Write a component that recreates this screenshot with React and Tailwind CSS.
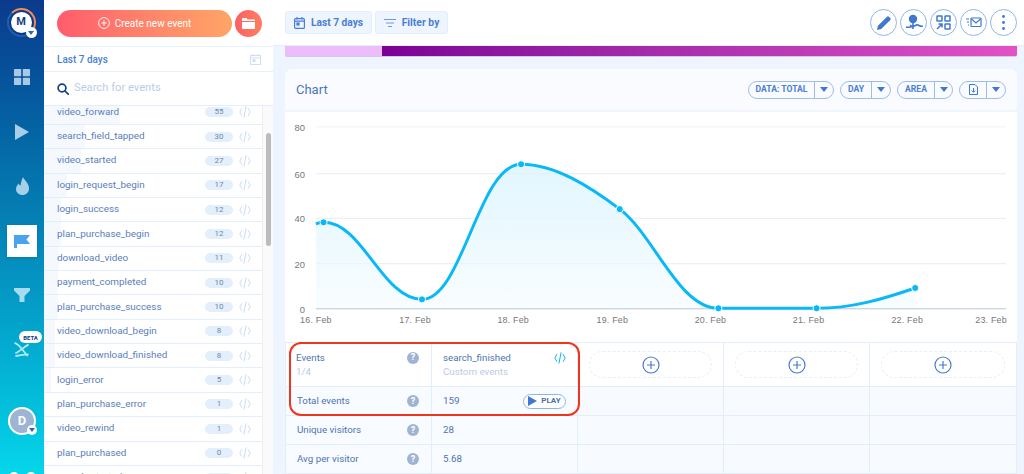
import React from "react";

const events = [
  ["video_forward", 55], ["search_field_tapped", 30], ["video_started", 27], ["login_request_begin", 17],
  ["login_success", 12], ["plan_purchase_begin", 12], ["download_video", 11], ["payment_completed", 10],
  ["plan_purchase_success", 10], ["video_download_begin", 8], ["video_download_finished", 8], ["login_error", 5],
  ["plan_purchase_error", 1], ["video_rewind", 1], ["plan_purchased", 0], ["search_started", 0],
];

const Code = ({ c = "#c9dbf4", w = 12 }) => (
  <svg width={w} height={w} viewBox="0 0 12 12" fill="none" stroke={c} strokeWidth="1" strokeLinecap="round" strokeLinejoin="round">
    <path d="M2.8 2.5 0.8 6l2 3.5M9.2 2.5 11.2 6l-2 3.5M7 0.8 5 11.2" />
  </svg>
);

const Q = () => (
  <span className="flex h-[12px] w-[12px] items-center justify-center rounded-full bg-[#9fb4d3] text-[9px] font-bold leading-none text-white">?</span>
);

const Caret = () => (
  <svg width="8" height="5" viewBox="0 0 8 5"><path d="M0 0h8L4 5z" fill="#3f78d0" /></svg>
);

const Pill = ({ w, d, children }) => (
  <div className={`flex h-[18px] items-center rounded-full border border-[#9dbdec] ${w}`}>
    <div className={`flex h-full items-center justify-center border-r border-[#9dbdec] text-[8.6px] font-bold text-[#4a7fd4] ${d}`}>{children}</div>
    <div className="flex flex-1 items-center justify-center"><Caret /></div>
  </div>
);

const Round = ({ children }) => (
  <div className="flex h-[27px] w-[27px] items-center justify-center rounded-full border border-[#8fb4ea] bg-white">{children}</div>
);

const Add = () => (
  <div className="flex h-full items-center justify-center border-r border-[#e3eefc] px-[11px]">
    <div className="flex h-[27px] w-full items-center justify-center rounded-full border border-dashed border-[#e6effb]">
      <svg width="18" height="18" viewBox="0 0 18 18" fill="none" stroke="#4a7bd0" strokeWidth="1.2"><circle cx="9" cy="9" r="8" /><path d="M9 5v8M5 9h8" /></svg>
    </div>
  </div>
);

const Label = ({ t }) => (
  <div className="flex items-center justify-between border-r border-b border-[#e3eefc] bg-[#f8fbff] pl-[11px] pr-[12px] text-[9.75px] text-[#4f74b0]"><span>{t}</span><Q /></div>
);
const Val = ({ t, children }) => (
  <div className="flex items-center justify-between border-r border-b border-[#e3eefc] bg-[#f8fbff] pl-[11px] pr-[11px] text-[9.75px] text-[#4f74b0]"><span>{t}</span>{children}</div>
);
const Blank = () => <div className="border-r border-b border-[#e3eefc] bg-[#f7faff]" />;

const xs = [["16. Feb", 314], ["17. Feb", 414], ["18. Feb", 513], ["19. Feb", 613], ["20. Feb", 712], ["21. Feb", 811], ["22. Feb", 910.5], ["23. Feb", 995]];
const ys = [["80", 127], ["60", 174.3], ["40", 219.3], ["20", 265], ["0", 310.5]];
const pts = [[321.7, 223.3], [421, 301], [521, 164.7], [620.5, 210], [720, 310], [819, 310], [918.5, 289.5]];
const line = "M314 224.8C316 224 319 223.5 321.7 223.3C361 223 381 301 421 301C462 301 478 164.7 521 164.7C555 164.7 590 187 620.5 210C655 236 680 310 720 310L819 310C855 310 885 301 918.5 289.5";

const Chart = () => (
  <svg width="731" height="232" viewBox="286 112 731 232" className="block" style={{ fontFamily: '"Liberation Sans", sans-serif' }}>
    <defs>
      <linearGradient id="fill" x1="0" y1="0" x2="0" y2="1">
        <stop offset="0" stopColor="#e2f6fe" />
        <stop offset="1" stopColor="#f8fdff" />
      </linearGradient>
    </defs>
    {ys.slice(0, 4).map(([t, y]) => <line key={t} x1="314" x2="1010" y1={y} y2={y} stroke="#eff1f4" strokeWidth="1" />)}
    <path d={line + "L918.5 310.5L314 310.5Z"} fill="url(#fill)" />
    {ys.slice(1, 4).map(([t, y]) => <line key={t} x1="314" x2="1010" y1={y} y2={y} stroke="#e6eef5" strokeOpacity="0.6" strokeWidth="1" />)}
    <line x1="314" x2="1010" y1="310.5" y2="310.5" stroke="#b8c6dc" strokeWidth="1" />
    <path d={line} fill="none" stroke="#0ab8f5" strokeWidth="3" />
    {pts.map(([x, y]) => <circle key={x} cx={x} cy={y} r="3.6" fill="#0ab8f5" stroke="#fff" strokeWidth="1" />)}
    {ys.map(([t, y]) => <text key={t} x="303" y={y + 4} textAnchor="end" fontSize="9.5" fill="#777">{t}</text>)}
    {xs.map(([t, x]) => <text key={t} x={x} y="325" textAnchor="middle" fontSize="9" letterSpacing="0.2" fill="#777">{t}</text>)}
  </svg>
);

export default function App() {
  return (
    <div className="flex h-[474px] w-[1024px] overflow-hidden bg-[#eef5fe]" style={{ fontFamily: 'Roboto, "Noto Sans", sans-serif' }}>
      {/* nav rail */}
      <nav className="relative flex h-full w-[44px] shrink-0 flex-col items-center overflow-hidden bg-gradient-to-b from-[#0b3a8c] via-[#0686b8] to-[#05d6ea]">
        <div className="relative mt-[8px] h-[29px] w-[29px] shrink-0 -translate-x-[1px] rounded-full border-2 border-[#f08a5a] border-b-[#1e5fb0] border-l-[#1e5fb0] bg-[#0b3a8c] p-[2px]">
          <div className="flex h-full w-full items-center justify-center rounded-full bg-white text-[11px] font-bold text-[#123f8c]">M</div>
          <div className="absolute -bottom-[3px] -right-[3px] flex h-[11px] w-[11px] items-center justify-center rounded-full bg-white">
            <svg width="6" height="4" viewBox="0 0 6 4"><path d="M0 0h6L3 4z" fill="#2a66c0" /></svg>
          </div>
        </div>
        <svg className="mt-[32px] shrink-0" width="16" height="16" viewBox="0 0 16 16" fill="#a9c7e6"><rect width="7.2" height="7.2" rx="0.6" /><rect x="8.8" width="7.2" height="7.2" rx="0.6" /><rect y="8.8" width="7.2" height="7.2" rx="0.6" /><rect x="8.8" y="8.8" width="7.2" height="7.2" rx="0.6" /></svg>
        <svg className="mt-[39px] shrink-0" width="14" height="16" viewBox="0 0 14 16" fill="#a9cfe8"><path d="M0 0l14 8-14 8z" /></svg>
        <svg className="mt-[37px] shrink-0" width="13" height="18" viewBox="0 0 13 18" fill="#a5d0e8"><path d="M7 0c1 3 6 6 6 11.5C13 15.5 10 18 6.500 18S0 15.500 0 12c0-2.500 1.500-4 2.500-5.500.5 1 1 1.600 2 2C5 6 5.500 3 7 0z" /></svg>
        <div className="mt-[30px] flex h-[32px] w-[30px] shrink-0 items-center justify-center bg-white shadow-sm">
          <svg width="16" height="13" viewBox="0 0 16 13" fill="#4ba3ee"><path d="M0 0h16l-3.500 4.500L16 9H3v4H0z" /></svg>
        </div>
        <svg className="mt-[31px] shrink-0" width="16" height="14" viewBox="0 0 16 14" fill="#a5dcef"><path d="M0 0h16v2.500L10.500 8v6h-5V8L0 2.500z" /></svg>
        <div className="absolute left-[19px] top-[331px] flex h-[12px] w-[23px] items-center justify-center rounded-full bg-white text-[6px] font-bold text-[#123f8c]">BETA</div>
        <svg className="mt-[40px] shrink-0" width="16" height="15" viewBox="0 0 17 17" fill="none" stroke="#b5ebf5" strokeWidth="2"><path d="M0 1c5 1 8 7 15 15M16 3C11 5 7 10 1 13M1 16c4-1 8-2 15-2" /></svg>
        <div className="relative mt-[50px] flex h-[28px] w-[28px] shrink-0 items-center justify-center rounded-full border-2 border-white bg-[#9db4d4] text-[13px] font-bold text-white">
          D
          <div className="absolute -bottom-[2px] -right-[3px] flex h-[10px] w-[10px] items-center justify-center rounded-full bg-white">
            <svg width="6" height="4" viewBox="0 0 6 4"><path d="M0 0h6L3 4z" fill="#2a66c0" /></svg>
          </div>
        </div>
        <div className="mt-[37px] flex shrink-0 gap-[7px]">
          <div className="h-[10px] w-[10px] rounded-full bg-white" />
          <div className="h-[10px] w-[10px] rounded-full bg-white" />
        </div>
      </nav>

      {/* events panel */}
      <aside className="flex h-full w-[229px] shrink-0 flex-col overflow-hidden bg-white">
        <div className="flex h-[47px] shrink-0 items-center gap-[3px] border-b border-[#e6f0fc] pl-[13px]">
          <div className="flex h-[27px] w-[175px] items-center justify-center gap-[5px] rounded-full bg-gradient-to-r from-[#ff5b6c] to-[#ffa566] text-[10px] text-white">
            <svg width="12" height="12" viewBox="0 0 12 12" fill="none" stroke="#fff" strokeWidth="0.9"><circle cx="6" cy="6" r="5.400" /><path d="M6 3.200v5.600M3.200 6h5.600" /></svg>
            Create new event
          </div>
          <div className="flex h-[27px] w-[27px] items-center justify-center rounded-full bg-gradient-to-r from-[#fb5f62] to-[#fd7f62]">
            <svg width="13" height="11" viewBox="0 0 13 11" fill="#fff"><path d="M0 1a1 1 0 0 1 1-1h3.500l1 1.500H12a1 1 0 0 1 1 1V3H0zM0 4h13v6a1 1 0 0 1-1 1H1a1 1 0 0 1-1-1z" /></svg>
          </div>
        </div>
        <div className="flex h-[25px] shrink-0 items-center justify-between border-b border-[#e6f0fc] pl-[13px] pr-[12px] text-[10px] font-medium text-[#4a7fd4]">
          Last 7 days
          <svg width="11" height="11" viewBox="0 0 11 11" fill="none" stroke="#cfe0f4" strokeWidth="1"><rect x="0.500" y="1.500" width="10" height="9" /><path d="M0.500 3.800h10M3 0v2M8 0v2" /><rect x="3" y="5.500" width="2" height="2" fill="#cfe0f4" /></svg>
        </div>
        <div className="flex h-[34px] shrink-0 items-center gap-[5px] border-b border-[#e3eefc] pl-[13px] text-[11.2px] text-[#bccde6]">
          <svg width="12" height="12" viewBox="0 0 12 12" fill="none" stroke="#143f86" strokeWidth="1.700"><circle cx="5" cy="5" r="3.900" /><path d="M8 8l3.200 3.200" strokeLinecap="round" /></svg>
          Search for events
        </div>
        <div className="flex min-h-0 flex-1 overflow-hidden">
          <div className="-mt-[5.5px] w-[218px] shrink-0">
            {events.map(([n, c]) => (
              <div key={n} className="relative flex h-[24.36px] items-center border-b border-[#e3eefc] pl-[13px] pr-[11px] text-[9.9px] text-[#5a7dbd]">
                <div className="absolute inset-y-0 left-0 bg-[#f5f9fe]" style={{ width: `${c * 1.38}px` }} />
                <span className="relative flex-1">{n}</span>
                <span className="relative mr-[6px] flex h-[10px] w-[28px] items-center justify-center rounded-full bg-[#e4effc] text-[8px] text-[#6d86ad]">{c}</span>
                <span className="relative"><Code /></span>
              </div>
            ))}
          </div>
          <div className="flex-1 border-l border-[#eeeeee] bg-[#fafafa] px-[3px]">
            <div className="mt-[27px] h-[113px] w-[5px] rounded-full bg-[#bcbcbc]" />
          </div>
        </div>
      </aside>

      {/* main */}
      <main className="flex h-full min-w-0 flex-1 flex-col">
        <header className="flex h-[46px] shrink-0 items-center justify-between border-b border-[#e3eefc] bg-white pl-[12px] pr-[7px]">
          <div className="flex gap-[3px]">
            <div className="flex h-[23px] w-[87px] items-center justify-center gap-[6px] rounded-[3px] border border-[#e3eefc] bg-[#eff5fe] text-[10.2px] font-bold text-[#4a7fd4]">
              <svg width="11" height="12" viewBox="0 0 11 12" fill="none" stroke="#4a7fd4" strokeWidth="1.200"><rect x="0.600" y="1.600" width="9.800" height="9.800" rx="1" /><path d="M0.600 4.200h9.800M3 0v2.500M8 0v2.500" /><rect x="3" y="6" width="2" height="2" fill="#4a7fd4" /></svg>
              Last 7 days
            </div>
            <div className="flex h-[23px] w-[73px] items-center justify-center gap-[6px] rounded-[3px] border border-[#e3eefc] bg-[#eff5fe] text-[10.4px] font-bold text-[#4a7fd4]">
              <svg width="12" height="8" viewBox="0 0 12 8" fill="none" stroke="#6f9ae0" strokeWidth="1"><path d="M0 .5h12M2 4h8M4 7.500h4" /></svg>
              Filter by
            </div>
          </div>
          <div className="flex gap-[3px]">
            <Round>
              <svg width="14" height="14" viewBox="0 0 15 15" fill="#3f78d0"><path d="M0 15l1-4.500L10.500 1a1.800 1.800 0 0 1 2.500 0l1 1a1.800 1.800 0 0 1 0 2.500L4.500 14z" /></svg>
            </Round>
            <Round>
              <svg width="18" height="17" viewBox="0 0 18 17" fill="none" stroke="#3f78d0" strokeWidth="1.600"><circle cx="8" cy="5" r="3.400" fill="#3f78d0" /><path d="M8 8.500V15M5 11l3 2.500M1 13c3 1 4 0 7-1 2 1 3-2 5-1s3 2 5 1" /></svg>
            </Round>
            <Round>
              <svg width="15" height="15" viewBox="0 0 15 15" fill="none" stroke="#3f78d0" strokeWidth="1.500"><rect x="1" y="1" width="5" height="5" rx="0.500" /><rect x="9" y="1" width="5" height="5" rx="0.500" /><rect x="9" y="9" width="5" height="5" rx="0.500" /><path d="M1 14l5-5M2.500 9H6v3.500" /></svg>
            </Round>
            <Round>
              <svg width="16" height="11" viewBox="0 0 16 11" fill="none" stroke="#3f78d0" strokeWidth="1.200"><rect x="5" y="1" width="10" height="8.500" rx="0.800" /><path d="M5.500 2l4.500 4 4.500-4M0 2h3M1 5h2M2 8h1" /></svg>
            </Round>
            <Round>
              <svg width="3" height="15" viewBox="0 0 3 15" fill="#3f78d0"><circle cx="1.500" cy="1.500" r="1.400" /><circle cx="1.500" cy="7.500" r="1.400" /><circle cx="1.500" cy="13.500" r="1.400" /></svg>
            </Round>
          </div>
        </header>

        <div className="flex min-h-0 flex-1 flex-col pl-[12px] pr-[7px]">
          <div className="flex h-[11px] shrink-0 overflow-hidden rounded-b-[2px] border-b border-[#d5c8ee]">
            <div className="w-[97px] bg-[#edbdfb]" />
            <div className="flex-1 bg-gradient-to-r from-[#7b0096] to-[#e251c6]" />
          </div>
          <section className="mt-[12px] flex min-h-0 flex-1 flex-col rounded-t-[8px] bg-white">
            <div className="flex h-[43px] shrink-0 items-center justify-between rounded-t-[8px] border-b-2 border-[#eef5fe] bg-[#f9fbff] pl-[11px] pr-[11px]">
              <span className="pt-[1px] text-[13px] text-[#4a76c0]">Chart</span>
              <div className="flex gap-[6px]">
                <Pill w="w-[86px]" d="w-[66px]">DATA: TOTAL</Pill>
                <Pill w="w-[51px]" d="w-[31px]">DAY</Pill>
                <Pill w="w-[56px]" d="w-[37px]">AREA</Pill>
                <Pill w="w-[47px]" d="w-[27px]">
                  <svg width="9" height="11" viewBox="0 0 9 11" fill="none" stroke="#3f78d0" strokeWidth="1"><path d="M.500.500h5.500l2.500 2.500v7.500h-8zM4.500 4v4M2.800 6.500l1.700 1.800 1.700-1.800" /></svg>
                </Pill>
              </div>
            </div>
            <Chart />
            <div className="relative grid flex-1 grid-cols-[146px_146px_146px_146px_147px] grid-rows-[44px_29px_29px_29px] border-t border-l border-[#e3eefc]">
              <div className="flex items-center justify-between border-r border-b border-[#e3eefc] pl-[10px] pr-[12px]">
                <div className="text-[9.75px] leading-[14px] text-[#4f74b0]">Events<div className="text-[#b9cbe5]">1/4</div></div>
                <div className="-mt-[14px]"><Q /></div>
              </div>
              <div className="flex items-center justify-between border-r border-b border-[#e3eefc] pl-[11px] pr-[11px]">
                <div className="text-[9.75px] leading-[14px] text-[#4f74b0]">search_finished<div className="text-[#b9cbe5]">Custom events</div></div>
                <div className="-mt-[14px]"><Code c="#12b5ee" /></div>
              </div>
              <div className="border-b border-[#e3eefc]"><Add /></div>
              <div className="border-b border-[#e3eefc]"><Add /></div>
              <div className="border-b border-[#e3eefc]"><Add /></div>

              <Label t="Total events" />
              <Val t="159">
                <div className="flex h-[15px] w-[43px] items-center justify-center gap-[4px] rounded-full border border-[#8fb4ea] bg-white text-[8px] font-bold text-[#4a6fa8]">
                  <svg width="9" height="10" viewBox="0 0 9 10" fill="#3f78d0"><path d="M0 0l9 5-9 5z" /></svg>
                  PLAY
                </div>
              </Val>
              <Blank /><Blank /><Blank />

              <Label t="Unique visitors" />
              <Val t="28" />
              <Blank /><Blank /><Blank />

              <Label t="Avg per visitor" />
              <Val t="5.68" />
              <Blank /><Blank /><Blank />

              <div className="pointer-events-none absolute left-[3px] -top-[1px] h-[74px] w-[291px] rounded-[12px] border-2 border-[#f0341e]" />
            </div>
          </section>
        </div>
      </main>
    </div>
  );
}
